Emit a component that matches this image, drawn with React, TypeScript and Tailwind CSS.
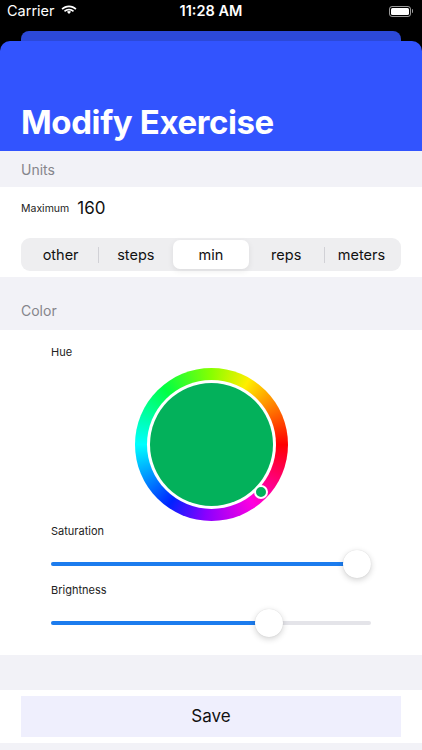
import React from 'react';

const units = ['other', 'steps', 'min', 'reps', 'meters'];

const Wifi: React.FC = () => (
  <svg width="16" height="12" viewBox="0 0 16 12" fill="white">
    <path d="M8 2.2c2.4 0 4.6.9 6.3 2.5l1.2-1.3C13.5 1.5 10.9.4 8 .4S2.5 1.5.5 3.4l1.2 1.3C3.4 3.1 5.6 2.2 8 2.2z" />
    <path d="M8 5.6c1.5 0 2.8.5 3.9 1.5l1.2-1.3C11.7 4.5 9.9 3.8 8 3.8s-3.7.7-5.1 2l1.2 1.3c1.1-1 2.4-1.5 3.9-1.5z" />
    <path d="M8 9l2.1-2.2C9.5 6.3 8.8 6 8 6s-1.5.3-2.1.8L8 9z" />
  </svg>
);

const Battery: React.FC = () => (
  <div className="flex items-center gap-[1px]">
    <div className="w-[22px] h-[11px] rounded-[3px] border border-white/60 p-[1px]">
      <div className="w-full h-full rounded-[1.5px] bg-white" />
    </div>
    <div className="w-[1.5px] h-[4px] rounded-r-sm bg-white/60" />
  </div>
);

const Slider: React.FC<{ label: string; value: number }> = ({ label, value }) => (
  <div>
    <div className="text-[11px] text-[#222] h-[14px] leading-[14px]">{label}</div>
    <div className="relative h-[28px] mt-[12px] flex items-center">
      <div className="w-full h-[4px] rounded-full bg-[#e4e4e9]" />
      <div className="absolute left-0 h-[4px] rounded-full bg-[#1c7cee]" style={{ width: `${value}%` }} />
      <div
        className="absolute w-[28px] h-[28px] rounded-full bg-white shadow-[0_2px_6px_rgba(0,0,0,0.18),0_0_1px_rgba(0,0,0,0.15)] -translate-x-1/2"
        style={{ left: `${value}%` }}
      />
    </div>
  </div>
);

export default function App() {
  return (
    <div className="w-[422px] h-[750px] overflow-hidden bg-[#f2f2f7] font-['Inter',sans-serif]">
      <div className="bg-black">
        <div className="h-[31px] px-[7px] flex items-center justify-between text-white relative">
          <div className="flex items-center gap-[6px] text-[14.5px] -mt-[9px]">
            <span>Carrier</span>
            <Wifi />
          </div>
          <div className="absolute left-0 right-0 -mt-[9px] text-center text-[14.5px] font-semibold">11:28 AM</div>
          <div className="pr-[2px] -mt-[9px]">
            <Battery />
          </div>
        </div>
        <div className="px-[21px]">
          <div className="h-[10px] rounded-t-[8px] bg-[#2c49d8]" />
        </div>
        <div className="h-[110px] rounded-t-[10px] bg-[#3254fe] px-[21px] flex items-end pb-[12px]">
          <h1 className="text-[33px] font-bold text-white tracking-[-0.4px] leading-none">Modify Exercise</h1>
        </div>
      </div>

      <div className="h-[36px] px-[21px] flex items-center text-[14px] text-[#85858b]">Units</div>

      <div className="bg-white h-[90px] px-[21px] pt-[13px]">
        <div className="flex items-center gap-[8px] h-[18px]">
          <span className="text-[10.5px] text-[#222]">Maximum</span>
          <span className="text-[17px] text-[#111]">160</span>
        </div>
        <div className="mt-[20px] h-[33px] rounded-[9px] bg-[#eeeef0] p-[2px] flex">
          {units.map((u, i) => {
            const active = u === 'min';
            const showDivider = i > 0 && !active && units[i - 1] !== 'min';
            return (
              <div key={u} className="flex-1 flex items-center relative">
                {showDivider && <div className="absolute left-0 w-px h-[16px] bg-[#d1d1d6]" />}
                <div
                  className={
                    active
                      ? 'w-full h-full rounded-[7px] bg-white shadow-[0_2px_6px_rgba(0,0,0,0.08)] flex items-center justify-center text-[14.5px] text-[#111]'
                      : 'w-full h-full flex items-center justify-center text-[14.5px] text-[#111]'
                  }
                >
                  {u}
                </div>
              </div>
            );
          })}
        </div>
      </div>

      <div className="h-[53px] px-[21px] flex items-end pb-[9px] text-[14px] text-[#85858b]">Color</div>

      <div className="bg-white h-[325px] px-[51px] pt-[15px]">
        <div className="text-[11px] text-[#222] h-[14px] leading-[14px]">Hue</div>
        <div className="flex justify-center mt-[9px] pl-[1px]">
          <div className="relative w-[153px] h-[153px] rounded-full bg-[conic-gradient(from_0deg,#88ff00,#ffee00_30deg,#ff0000_90deg,#ff00e0_145deg,#8800ff_185deg,#0022ff_215deg,#00ffff_270deg,#00ff44_320deg,#88ff00)] p-[12px]">
            <div className="w-full h-full rounded-full bg-white p-[3px]">
              <div className="w-full h-full rounded-full bg-[#03b15b]" />
            </div>
            <div className="absolute left-[119px] top-[117px] w-[14px] h-[14px] rounded-full bg-[#03b15b] border-[2.5px] border-white" />
          </div>
        </div>
        <div className="mt-[3px] flex flex-col gap-[5px]">
          <Slider label="Saturation" value={95.6} />
          <Slider label="Brightness" value={68} />
        </div>
      </div>

      <div className="h-[35px]" />

      <div className="bg-white h-[53px] px-[21px] pt-[6px]">
        <button className="w-full h-[41px] bg-[#efeffd] text-[17px] text-[#111] flex items-center justify-center">
          Save
        </button>
      </div>
    </div>
  );
}
